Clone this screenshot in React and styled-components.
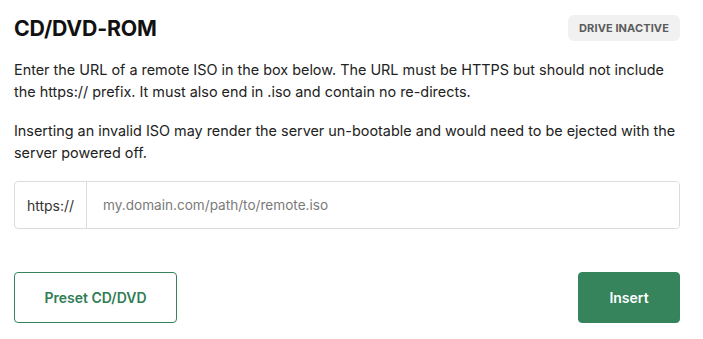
import React from 'react'
import styled, { createGlobalStyle } from 'styled-components'

const GlobalStyle = createGlobalStyle`
  body {
    margin: 0;
    background: #ffffff;
    font-family: Inter, "Noto Sans", sans-serif;
    color: #1f1f1f;
  }
`;

function App() {
  return (
    <>
      <GlobalStyle />
      <Panel>
        <Header>
          <Title>CD/DVD-ROM</Title>
          <Badge>Drive inactive</Badge>
        </Header>

        <Text>
          Enter the URL of a remote ISO in the box below. The URL must be HTTPS but should not include
          the https:// prefix. It must also end in .iso and contain no re-directs.
        </Text>
        <Text>
          Inserting an invalid ISO may render the server un-bootable and would need to be ejected with the
          server powered off.
        </Text>

        <InputGroup>
          <Prefix>https://</Prefix>
          <UrlInput placeholder="my.domain.com/path/to/remote.iso" />
        </InputGroup>

        <Actions>
          <Button>Preset CD/DVD</Button>
          <Button primary>Insert</Button>
        </Actions>
      </Panel>
    </>
  )
}

export default App

const Panel = styled.div`
  width: 666px;
  padding: 15px 14px 16px;
  display: flex;
  flex-direction: column;
`;

const Header = styled.div`
  display: flex;
  align-items: center;
  justify-content: space-between;
  height: 26px;
`;

const Title = styled.h2`
  margin: 0;
  font-size: 21.3px;
  font-weight: 700;
  color: #111;
  letter-spacing: -0.2px;
`;

const Badge = styled.span`
  height: 26px;
  width: 112px;
  box-sizing: border-box;
  display: flex;
  align-items: center;
  justify-content: center;
  background: #f1f1f1;
  border-radius: 6px;
  font-size: 11px;
  font-weight: 700;
  text-transform: uppercase;
  color: #5c5c5c;
  letter-spacing: 0.1px;
`;

const Text = styled.p`
  margin: 18px 0 0;
  font-size: 14.4px;
  line-height: 22px;
  color: #222;
  & + & {
    margin-top: 17px;
  }
`;

const InputGroup = styled.div`
  margin-top: 17px;
  height: 48px;
  box-sizing: border-box;
  display: flex;
  border: 1px solid #dcdcdc;
  border-radius: 4px;
  overflow: hidden;
`;

const Prefix = styled.span`
  width: 72px;
  box-sizing: border-box;
  display: flex;
  align-items: center;
  justify-content: center;
  border-right: 1px solid #dcdcdc;
  font-size: 14px;
  color: #333;
`;

const UrlInput = styled.input`
  flex: 1;
  border: none;
  outline: none;
  padding: 0 16px;
  font-family: Inter, "Noto Sans", sans-serif;
  font-size: 13.6px;
  color: #222;
  &::placeholder {
    color: #7a7a7a;
  }
`;

const Actions = styled.div`
  margin-top: 43px;
  display: flex;
  justify-content: space-between;
`;

const Button = styled.button`
  height: 51px;
  width: ${p => (p.primary ? '102px' : '163px')};
  border-radius: 4px;
  border: 1px solid #35845c;
  background: ${p => (p.primary ? '#35845c' : '#fff')};
  color: ${p => (p.primary ? '#fff' : '#2f7d54')};
  font-family: Inter, "Noto Sans", sans-serif;
  font-size: 14px;
  font-weight: 600;
  cursor: pointer;
`;
